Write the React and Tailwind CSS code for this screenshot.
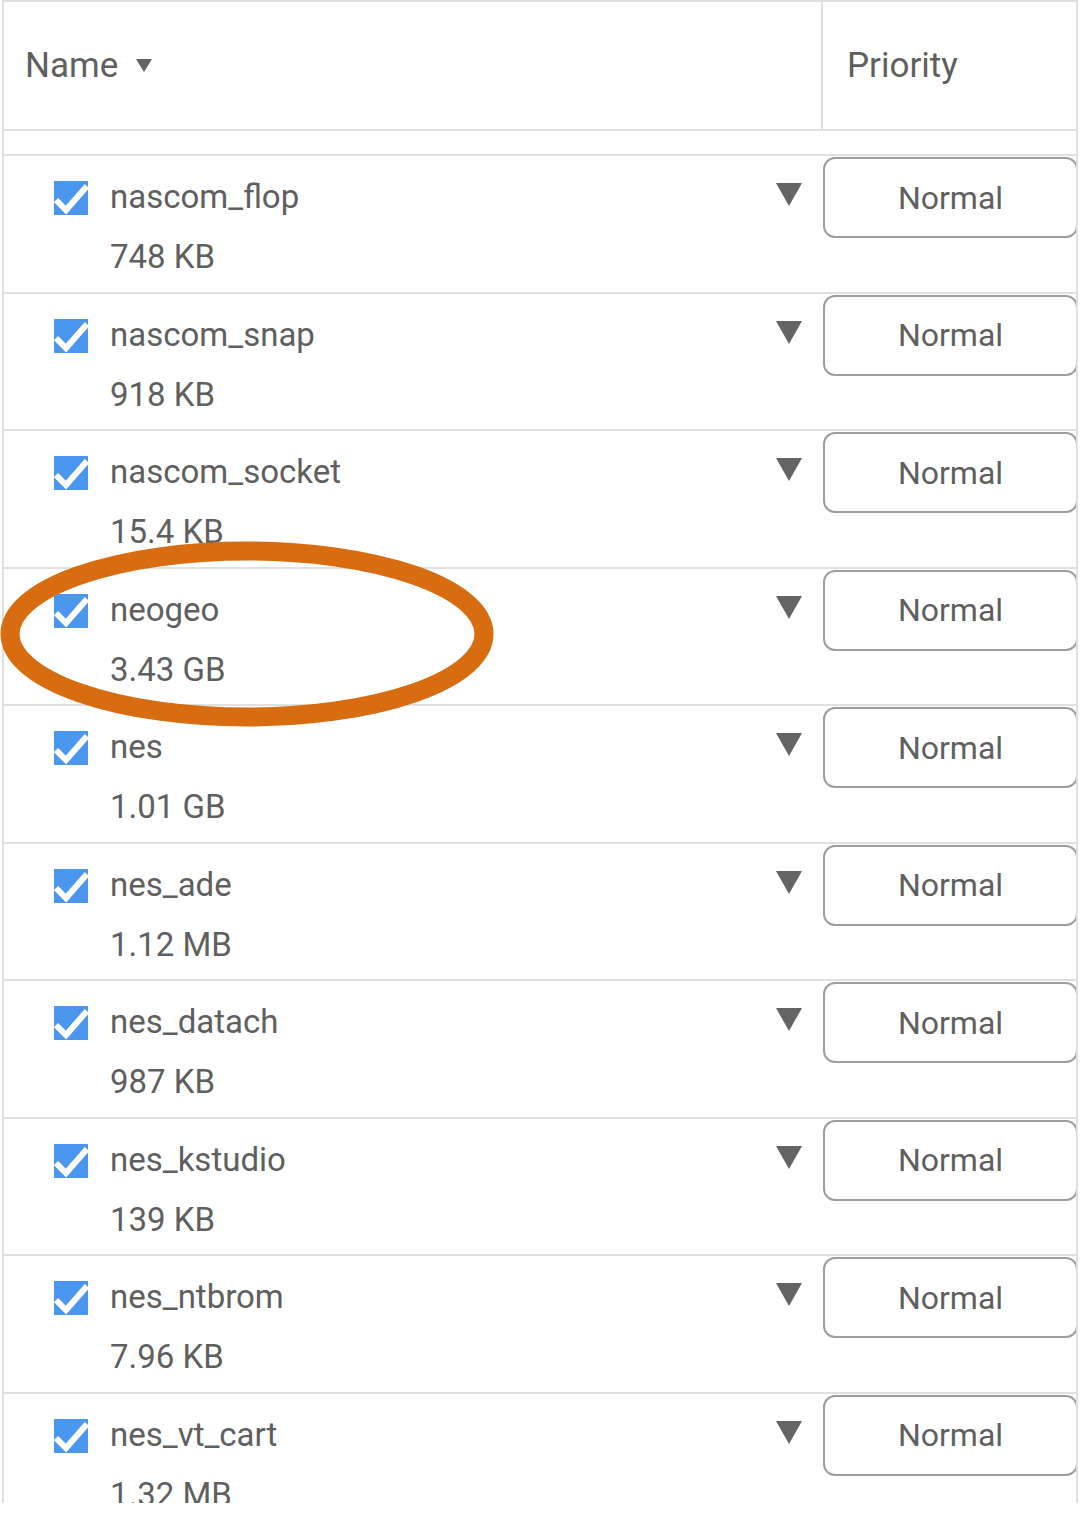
import React from "react";

const rows = [
  ["nascom_flop", "748 KB"],
  ["nascom_snap", "918 KB"],
  ["nascom_socket", "15.4 KB"],
  ["neogeo", "3.43 GB"],
  ["nes", "1.01 GB"],
  ["nes_ade", "1.12 MB"],
  ["nes_datach", "987 KB"],
  ["nes_kstudio", "139 KB"],
  ["nes_ntbrom", "7.96 KB"],
  ["nes_vt_cart", "1.32 MB"],
];

function Check() {
  return (
    <div className="w-[34px] h-[34px] bg-[#4b96ee] flex items-center justify-center shrink-0">
      <svg width="34" height="34" viewBox="0 0 34 34">
        <path d="M2 19 L12 29 L33 5" fill="none" stroke="white" strokeWidth="6" strokeLinejoin="miter" />
      </svg>
    </div>
  );
}

function Tri({ w, h }) {
  return (
    <svg width={w} height={h} viewBox={`0 0 ${w} ${h}`} className="shrink-0">
      <polygon points={`0,0 ${w},0 ${w / 2},${h}`} fill="#646464" />
    </svg>
  );
}

export default function App() {
  return (
    <div
      className="relative w-[1080px] h-[1533px] bg-white overflow-hidden text-[#5f5f5f]"
      style={{ fontFamily: "Roboto, 'Noto Sans', sans-serif" }}
    >
      <div className="ml-[2px] w-[1076px] h-[1503px] overflow-hidden border-l-2 border-r-2 border-t-2 border-[#e0e0e0]">
        <div className="flex h-[129px] border-b-2 border-[#e0e0e0]">
          <div className="w-[819px] border-r-2 border-[#e0e0e0] flex items-center pl-[21px] gap-[18px]">
            <span className="text-[35px] leading-[40px]">Name</span>
            <Tri w={16} h={13} />
          </div>
          <div className="flex-1 flex items-center pl-[24px]">
            <span className="text-[35px] leading-[40px]">Priority</span>
          </div>
        </div>
        <div className="h-[23px]" />
        {rows.map(([name, size]) => (
          <div key={name} className="h-[137.5px] border-t-2 border-[#e0e0e0] flex">
            <div className="ml-[50px] mt-[25px]">
              <Check />
            </div>
            <div className="ml-[22px] flex-1 flex flex-col mt-[21px] gap-[20px]">
              <span className="text-[33px] leading-[40px]">{name}</span>
              <span className="text-[33px] leading-[40px]">{size}</span>
            </div>
            <div className="mt-[27px] mr-[21px]">
              <Tri w={26} h={23} />
            </div>
            <div className="mt-[1px] w-[255px] h-[81px] -mr-[2px] shrink-0 border-2 border-[#9e9e9e] rounded-[12px] flex items-center justify-center">
              <span className="text-[32px] leading-[40px]">Normal</span>
            </div>
          </div>
        ))}
      </div>
      <svg
        className="absolute left-0 top-[541px] pointer-events-none"
        width="494"
        height="186"
        viewBox="0 0 494 186"
      >
        <ellipse cx="247" cy="93" rx="237" ry="83" fill="none" stroke="#d86c10" strokeWidth="19" />
      </svg>
    </div>
  );
}
